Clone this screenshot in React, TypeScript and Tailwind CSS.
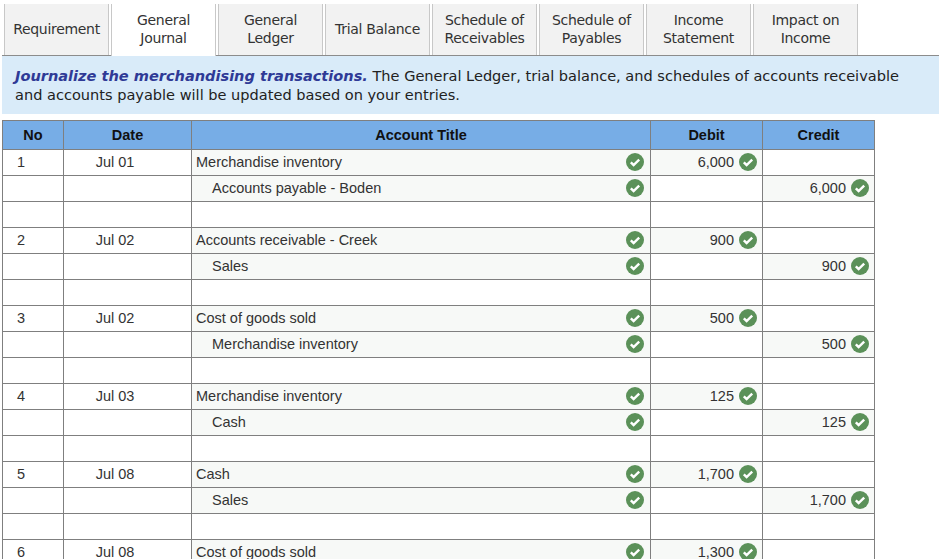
const tabs = [
  ['Requirement'],
  ['General', 'Journal'],
  ['General', 'Ledger'],
  ['Trial Balance'],
  ['Schedule of', 'Receivables'],
  ['Schedule of', 'Payables'],
  ['Income', 'Statement'],
  ['Impact on', 'Income'],
]

const entries = [
  { no: '1', date: 'Jul 01', debitTitle: 'Merchandise inventory', creditTitle: 'Accounts payable - Boden', amount: '6,000' },
  { no: '2', date: 'Jul 02', debitTitle: 'Accounts receivable - Creek', creditTitle: 'Sales', amount: '900' },
  { no: '3', date: 'Jul 02', debitTitle: 'Cost of goods sold', creditTitle: 'Merchandise inventory', amount: '500' },
  { no: '4', date: 'Jul 03', debitTitle: 'Merchandise inventory', creditTitle: 'Cash', amount: '125' },
  { no: '5', date: 'Jul 08', debitTitle: 'Cash', creditTitle: 'Sales', amount: '1,700' },
  { no: '6', date: 'Jul 08', debitTitle: 'Cost of goods sold', creditTitle: 'Merchandise inventory', amount: '1,300' },
]

function Check() {
  return (
    <svg width="18" height="18" viewBox="0 0 18 18" className="shrink-0 -translate-y-px">
      <circle cx="9" cy="9" r="9" fill="#5b9159" />
      <path d="M4.8 9.4 L7.6 12 L13.2 6.6" fill="none" stroke="#fff" strokeWidth="2.4" />
    </svg>
  )
}

function Amount({ value }: { value: string }) {
  return (
    <td className="h-[26px] border border-[#7f7f7f] bg-[#f7f9f7] p-0">
      <div className="flex items-center justify-end gap-[5px] pr-[5px]">
        <span>{value}</span>
        <Check />
      </div>
    </td>
  )
}

function Title({ text, indent }: { text: string; indent?: boolean }) {
  return (
    <td className="h-[26px] border border-[#7f7f7f] bg-[#f7f9f7] p-0">
      <div className={`flex items-center justify-between pr-[6px] ${indent ? 'pl-[20px]' : 'pl-[4px]'}`}>
        <span>{text}</span>
        <Check />
      </div>
    </td>
  )
}

const cell = 'h-[26px] border border-[#7f7f7f] p-0'

export default function App() {
  return (
    <div className="h-[559px] w-[941px] overflow-hidden bg-white pt-[4px]">
      {/* tabs */}
      <div className="ml-[2px] flex h-[52px] w-[937px] gap-[2px] border-b border-[#8c8c8c] pl-[2px] font-['DejaVu_Sans',sans-serif] text-[14px] leading-[18px] text-[#333]">
        {tabs.map((lines, i) => (
          <div
            key={lines.join(' ')}
            className={
              i === 1
                ? 'relative z-10 -mb-px flex h-[52px] w-[105px] flex-col items-center justify-center border-x border-[#c8c8c8] bg-white'
                : 'flex h-[51px] w-[105px] flex-col items-center justify-center border-x border-[#c8c8c8] bg-[#f2f2f2]'
            }
          >
            {lines.map((l) => (
              <span key={l} className="-translate-y-px tracking-[-0.3px] whitespace-nowrap">{l}</span>
            ))}
          </div>
        ))}
      </div>

      {/* instructions */}
      <div className="ml-[2px] h-[58px] w-[937px] bg-[#d9ebf9] pt-[10px] pl-[13px] font-['DejaVu_Sans',sans-serif] text-[14.55px] leading-[19px] text-[#222]">
        <b className="font-bold italic text-[#2f3a96]">Journalize the merchandising transactions.</b> The General Ledger, trial balance, and schedules of accounts receivable
        <br />
        and accounts payable will be updated based on your entries.
      </div>

      {/* journal table */}
      <table className="mt-[6px] ml-[2px] w-[873px] table-fixed border-collapse font-['Liberation_Sans',sans-serif] text-[14.5px] text-[#333]">
        <colgroup>
          <col className="w-[61px]" />
          <col className="w-[128px]" />
          <col className="w-[459px]" />
          <col className="w-[112px]" />
          <col className="w-[112px]" />
        </colgroup>
        <thead>
          <tr className="bg-[#77ade6] font-bold text-[#111]">
            {['No', 'Date', 'Account Title', 'Debit', 'Credit'].map((h) => (
              <th key={h} className="h-[29px] border border-[#7f7f7f] p-0 pt-px text-center font-bold">{h}</th>
            ))}
          </tr>
        </thead>
        <tbody>
          {entries.map((e) => [
            <tr key={`${e.no}a`}>
              <td className={`${cell} pr-[24px] text-center`}>{e.no}</td>
              <td className={`${cell} pr-[25px] text-center`}>{e.date}</td>
              <Title text={e.debitTitle} />
              <Amount value={e.amount} />
              <td className={cell} />
            </tr>,
            <tr key={`${e.no}b`}>
              <td className={cell} />
              <td className={cell} />
              <Title text={e.creditTitle} indent />
              <td className={cell} />
              <Amount value={e.amount} />
            </tr>,
            <tr key={`${e.no}c`}>
              <td className={cell} />
              <td className={cell} />
              <td className={cell} />
              <td className={cell} />
              <td className={cell} />
            </tr>,
          ])}
        </tbody>
      </table>
    </div>
  )
}
